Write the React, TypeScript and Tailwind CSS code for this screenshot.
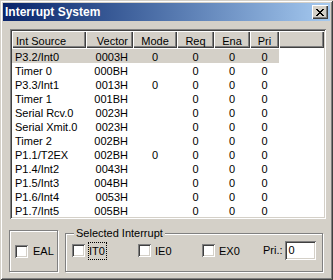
import React from "react";

const rows: [string, string, string, string, string, string][] = [
  ["P3.2/Int0", "0003H", "0", "0", "0", "0"],
  ["Timer 0", "000BH", "", "0", "0", "0"],
  ["P3.3/Int1", "0013H", "0", "0", "0", "0"],
  ["Timer 1", "001BH", "", "0", "0", "0"],
  ["Serial Rcv.0", "0023H", "", "0", "0", "0"],
  ["Serial Xmit.0", "0023H", "", "0", "0", "0"],
  ["Timer 2", "002BH", "", "0", "0", "0"],
  ["P1.1/T2EX", "002BH", "0", "0", "0", "0"],
  ["P1.4/Int2", "0043H", "", "0", "0", "0"],
  ["P1.5/Int3", "004BH", "", "0", "0", "0"],
  ["P1.6/Int4", "0053H", "", "0", "0", "0"],
  ["P1.7/Int5", "005BH", "", "0", "0", "0"],
];

const hdr =
  "h-[17px] shrink-0 pt-[3px] leading-[14px] overflow-hidden whitespace-nowrap shadow-[inset_1px_1px_0_#ffffff,inset_-1px_-1px_0_#404040,inset_-2px_-2px_0_#808080]";

function CloseGlyph() {
  const px = [
    [0, 1, 6, 7],
    [1, 2, 5, 6],
    [2, 3, 4, 5],
    [3, 4],
    [2, 3, 4, 5],
    [1, 2, 5, 6],
    [0, 1, 6, 7],
  ];
  return (
    <svg width="8" height="7" viewBox="0 0 8 7" shapeRendering="crispEdges">
      {px.map((r, y) =>
        r.map((x) => <rect key={`${y}-${x}`} x={x} y={y} width="1" height="1" fill="#000" />)
      )}
    </svg>
  );
}

function Check() {
  return (
    <div className="w-[13px] h-[13px] shrink-0 bg-white shadow-[inset_1px_1px_0_#808080,inset_-1px_-1px_0_#ffffff,inset_2px_2px_0_#404040,inset_-2px_-2px_0_#d4d0c8]" />
  );
}

function CheckItem({ label, focus, w }: { label: string; focus?: boolean; w: string }) {
  return (
    <div className={`flex items-center shrink-0 ${w}`}>
      <Check />
      <span
        className={`ml-[3px] h-[18px] leading-[16px] pr-[1px] border ${
          focus ? "border-dotted border-black" : "border-transparent"
        }`}
      >
        {label}
      </span>
    </div>
  );
}

export default function App() {
  return (
    <div className="w-[333px] h-[280px] bg-[#d4d0c8] p-[3px] flex flex-col text-[11px] text-black font-['Liberation_Sans',Arial,sans-serif] shadow-[inset_1px_1px_0_#d4d0c8,inset_-1px_-1px_0_#404040,inset_2px_2px_0_#ffffff,inset_-2px_-2px_0_#808080]">
      {/* Title bar */}
      <div className="h-[18px] shrink-0 flex items-center pl-[2px] pr-[2px] bg-gradient-to-r from-[#0a246a] to-[#a6caf0]">
        <span className="text-white font-bold text-[12px] leading-[14px]">Interrupt System</span>
        <div className="ml-auto w-[16px] h-[14px] bg-[#d4d0c8] flex items-center justify-center pl-[0px] shadow-[inset_1px_1px_0_#ffffff,inset_-1px_-1px_0_#404040,inset_-2px_-2px_0_#808080]">
          <CloseGlyph />
        </div>
      </div>

      {/* List view */}
      <div className="ml-[7px] mt-[8px] w-[316px] h-[190px] shrink-0 p-[2px] bg-white shadow-[inset_1px_1px_0_#808080,inset_-1px_-1px_0_#ffffff,inset_2px_2px_0_#404040,inset_-2px_-2px_0_#d4d0c8]">
        <div className="w-full h-full overflow-hidden flex flex-col">
          <div className="flex bg-[#d4d0c8] shrink-0">
            <div className={`${hdr} w-[74px] pl-[4px]`}>Int Source</div>
            <div className={`${hdr} w-[47px] pr-[5px] text-right`}>Vector</div>
            <div className={`${hdr} w-[44px] text-center`}>Mode</div>
            <div className={`${hdr} w-[37px] text-center`}>Req</div>
            <div className={`${hdr} w-[36px] text-center`}>Ena</div>
            <div className={`${hdr} w-[29px] text-center`}>Pri</div>
            <div className={`${hdr} flex-1`} />
          </div>
          <div className="h-[1px] shrink-0" />
          {rows.map((r, i) => (
            <div
              key={i}
              className={`flex w-[267px] h-[14px] shrink-0 pt-[1px] leading-[14px] overflow-hidden whitespace-nowrap ${
                i === 0 ? "bg-[#d4d0c8]" : ""
              }`}
            >
              <div className="w-[74px] pl-[3px]">{r[0]}</div>
              <div className="w-[47px] pr-[5px] text-right">{r[1]}</div>
              <div className="w-[44px] text-center">{r[2]}</div>
              <div className="w-[37px] text-center">{r[3]}</div>
              <div className="w-[36px] text-center">{r[4]}</div>
              <div className="w-[29px] text-center">{r[5]}</div>
            </div>
          ))}
        </div>
      </div>

      {/* Bottom controls */}
      <div className="ml-[6px] mt-[11px] flex items-end shrink-0">
        <div className="w-[49px] h-[42px] border border-[#808080] shadow-[inset_1px_1px_0_#ffffff,1px_1px_0_#ffffff] flex items-center pl-[5px]">
          <Check />
          <span className="ml-[5px]">EAL</span>
        </div>
        <div className="relative ml-[7px] w-[258px] h-[39px] border border-[#808080] shadow-[inset_1px_1px_0_#ffffff,1px_1px_0_#ffffff] flex items-center pl-[6px] pb-[4px]">
          <span className="absolute left-[8px] top-[-8px] bg-[#d4d0c8] px-[2px] leading-[14px]">Selected Interrupt</span>
          <CheckItem label="IT0" focus w="w-[66px]" />
          <CheckItem label="IE0" w="w-[64px]" />
          <CheckItem label="EX0" w="w-[61px]" />
          <span>Pri.:</span>
          <div className="ml-[2px] w-[31px] h-[19px] bg-white pl-[4px] leading-[19px] shadow-[inset_1px_1px_0_#808080,inset_-1px_-1px_0_#ffffff,inset_2px_2px_0_#404040,inset_-2px_-2px_0_#d4d0c8]">
            0
          </div>
        </div>
      </div>
    </div>
  );
}
